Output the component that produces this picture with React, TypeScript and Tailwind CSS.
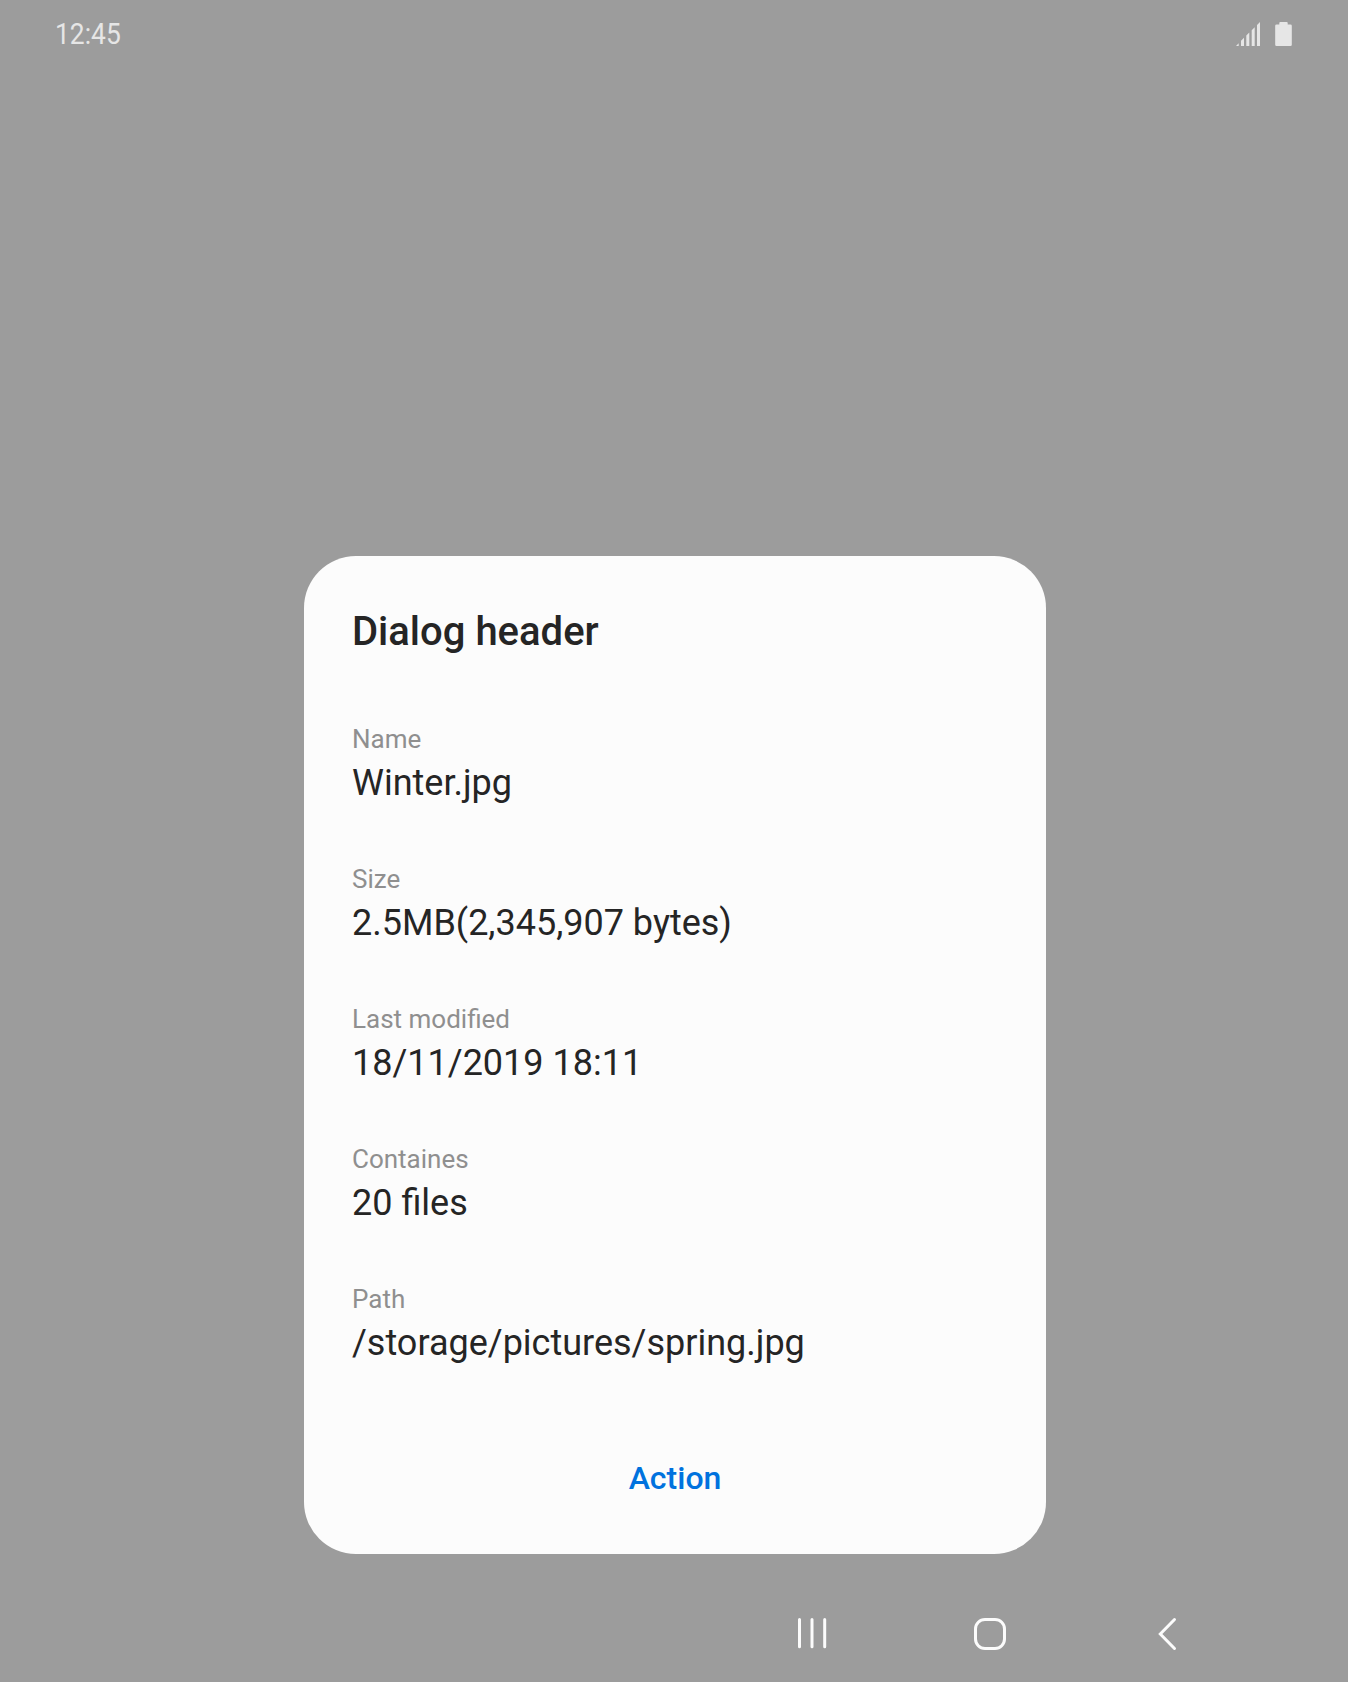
const details = [
  ["Name", "Winter.jpg"],
  ["Size", "2.5MB(2,345,907 bytes)"],
  ["Last modified", "18/11/2019 18:11"],
  ["Containes", "20 files"],
  ["Path", "/storage/pictures/spring.jpg"],
];

export default function App() {
  return (
    <div className="flex h-[1682px] w-[1348px] flex-col overflow-hidden bg-[#9c9c9c] font-['Roboto',sans-serif]">
      <header className="flex h-[68px] items-center justify-between pl-[55px] pr-14 text-[#e6e6e6]">
        <span className="origin-left scale-x-[0.88] text-[30px] leading-[36px]">12:45</span>
        <div className="flex items-center gap-[15px]">
          <svg width="24" height="24" viewBox="0 0 24 24" fill="currentColor">
            <path d="M0 24l2.700-2.700V24zM5 24v-5.300l3-3V24zM10.300 24V13.600l3-3V24zM15.700 24V8.300l3-3V24zM21 24V3l3-3v24z" />
          </svg>
          <svg width="17" height="24" viewBox="0 0 17 24" fill="currentColor">
            <path d="M5.300 0h6.400q1 0 1 1v1.500h2.800q1.300 0 1.300 1.300v18.900q0 1.300-1.300 1.300h-14Q.2 24 .2 22.700V3.800q0-1.300 1.300-1.300h2.800V1q0-1 1-1z" />
          </svg>
        </div>
      </header>
      <main className="mt-[488px] ml-[304px] flex h-[998px] w-[742px] shrink-0 flex-col rounded-[52px] bg-[#fcfcfc] px-12 pt-[52px]">
        <h1 className="text-[40px] leading-[48px] font-medium text-[#252525]">Dialog header</h1>
        <dl className="mt-[67px] flex flex-col gap-14">
          {details.map(([label, value]) => (
            <div key={label} className="flex h-[84px] flex-col gap-1">
              <dt className="text-[26px] leading-[32px] text-[#8f8f8f]">{label}</dt>
              <dd className="text-[36px] leading-[48px] text-[#252525]">{value}</dd>
            </div>
          ))}
        </dl>
        <button className="mt-[91px] self-center text-[32px] leading-[40px] font-medium text-[#0072de]">Action</button>
      </main>
      <nav className="flex h-[128px] items-center pt-8 pl-[796px] text-[#fcfcfc]">
        <svg width="32" height="34" viewBox="0 0 32 34" fill="none" stroke="currentColor" strokeWidth="3" strokeLinecap="round">
          <path d="M3.500 2.500v27.300M16 2.500v27.300M28.700 2.500v27.300" />
        </svg>
        <svg className="ml-36" width="34" height="34" viewBox="0 0 34 34" fill="none" stroke="currentColor" strokeWidth="3">
          <rect x="3.5" y="2.500" width="29" height="29" rx="9.500" />
        </svg>
        <svg className="ml-[150px]" width="22" height="34" viewBox="0 0 22 34" fill="none" stroke="currentColor" strokeWidth="3" strokeLinecap="round">
          <path d="M18.500 2.500 4.300 17l14.200 14.500" />
        </svg>
      </nav>
    </div>
  );
}
